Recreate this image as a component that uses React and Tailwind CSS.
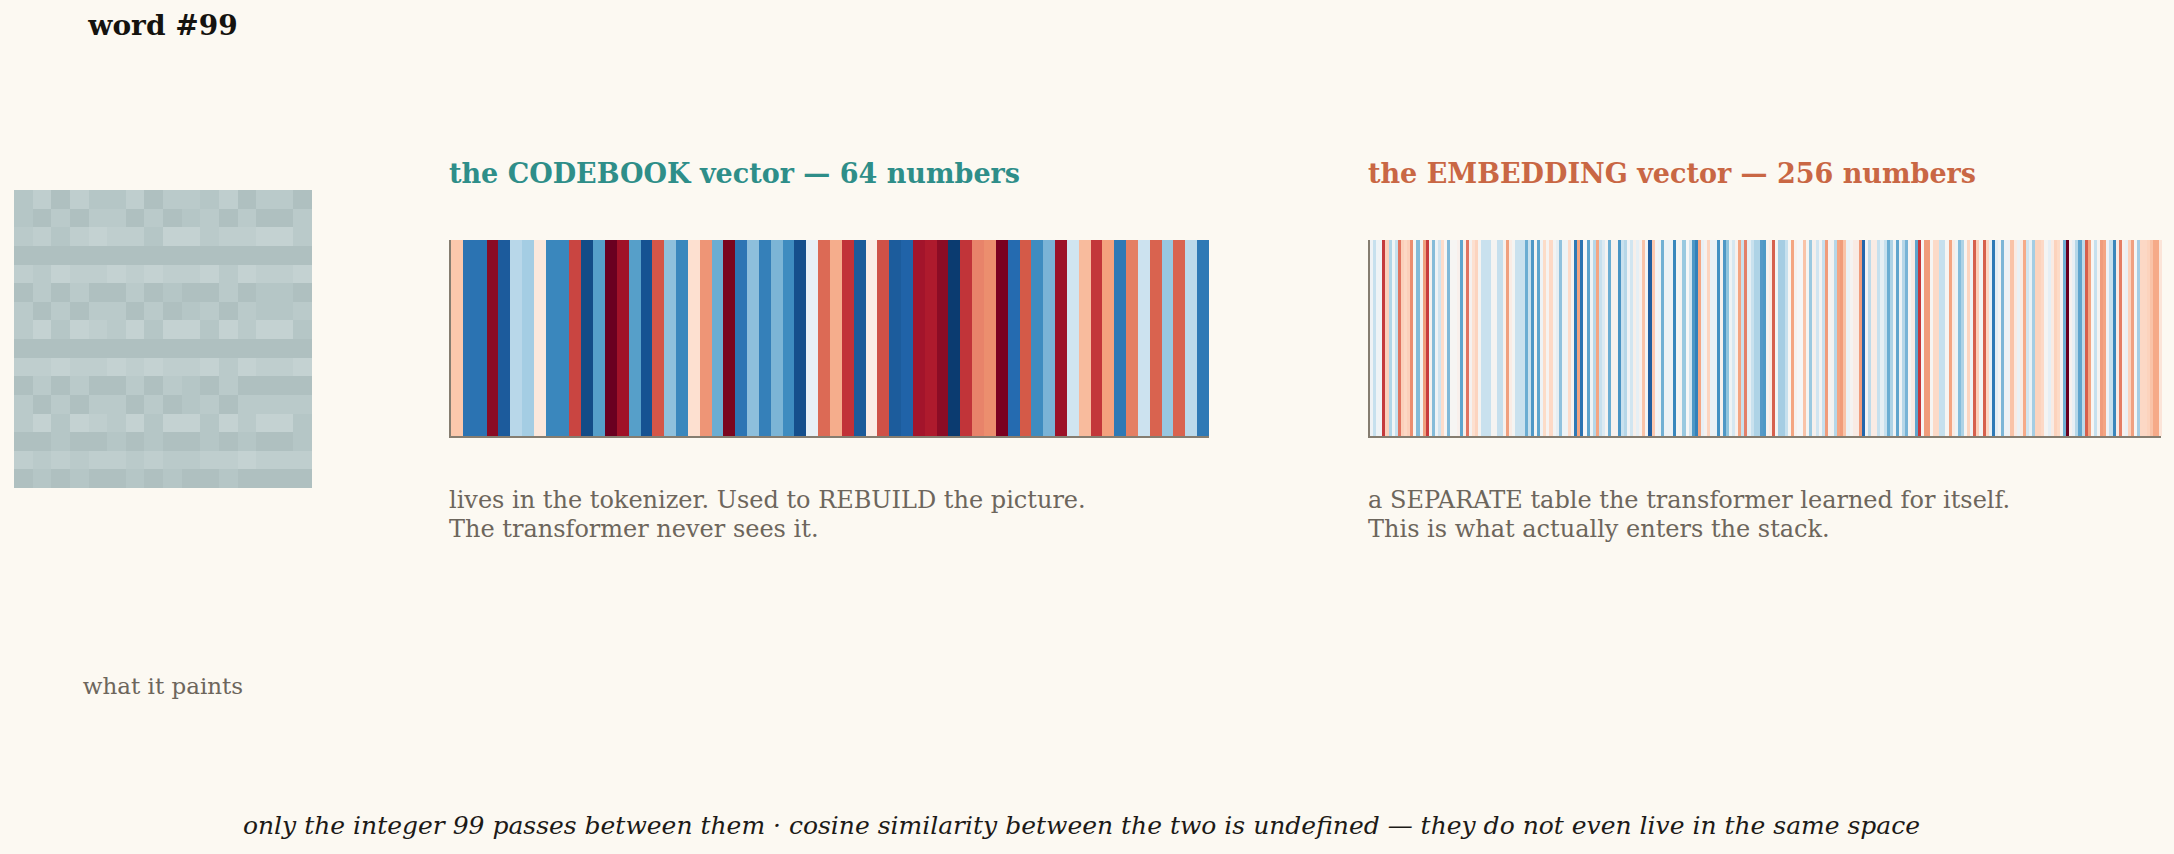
// codebook vs embedding strip plot for one token
const codebook = [
  '#fbc8ac', '#2b73b2', '#2b73b2', '#8a0b24', '#1c5b9c', '#b8d7e9', '#a4cde3', '#fbe8dc',
  '#3a87bd', '#3a87bd', '#c94541', '#134c87', '#569fc9', '#6a0020', '#a01228', '#569fc9',
  '#155292', '#d45648', '#8fc0dc', '#3a87bd', '#fde0d0', '#ee9576', '#6badd2', '#7a0620',
  '#2c75b4', '#8dbfdc', '#3580b9', '#7cb5d6', '#3e8cc0', '#154f8c', '#e8f0f6', '#dc6a55',
  '#f5ad8c', '#c13238', '#1c5b9a', '#fbece5', '#cf5147', '#1c5c9c', '#2063a8', '#a3142b',
  '#ae1a2d', '#8b0c25', '#0b3b70', '#c13439', '#e8836a', '#ec8e6e', '#7a0020', '#256bb0',
  '#d45a48', '#3e8cc0', '#7ab3d6', '#9c1228', '#d0e5f0', '#f8bb9d', '#c3373a', '#f4a27e',
  '#2e79b5', '#e47f63', '#cce2ef', '#d9634f', '#98c7e0', '#d9634f', '#bbd9ea', '#2e79b5',
];

const embedding = [
  // 0-63
  '#eef2f5', '#c6e0ee', '#eef3f6', '#eef3f6', '#c43a3c', '#fcd0bb', '#b0d5e8', '#f0f4f6',
  '#c6e0ee', '#e17360', '#fbd0bb', '#fcd8c5', '#fbd0bb', '#ec8d70', '#f6f5f3', '#84bbd9',
  '#f3f1f0', '#f0a07f', '#c83a3d', '#f4f1ee', '#84bbd9', '#eef2f5', '#cfe3ef', '#fddcca',
  '#f7f4f2', '#80b8d8', '#f6f5f3', '#f6f5f3', '#f8f0ec', '#5fa5cd', '#f9efea', '#e07360',
  '#f5f1ef', '#fde0d0', '#fcd4bf', '#f5f3f1', '#c9e1ee', '#c9e1ee', '#c9e1ee', '#f5f3f1',
  '#f5f3f1', '#c6dfed', '#c6dfed', '#f7f1ee', '#f0a07f', '#f9ece5', '#f4f4f2', '#c9e1ee',
  '#c9e1ee', '#c9e1ee', '#6badd2', '#c9e1ee', '#4f98c6', '#f4f4f2', '#5fa5cd', '#eef3f6',
  '#fcdcc8', '#f6f3f1', '#fdd9c6', '#f2f3f3', '#e6eef3', '#8fc1dd', '#eef3f5', '#eef3f5',
  // 64-127
  '#fddbc9', '#f6f3f1', '#2f79b5', '#f4a582', '#2c73b1', '#f7f7f7', '#5da3cc', '#eef3f5',
  '#b6d7e8', '#f4a582', '#c6e0ee', '#dceaf2', '#f5f3f1', '#6badd2', '#f7f1ee', '#f7f1ee',
  '#4a94c4', '#c9e1ee', '#b6d7e8', '#f0f3f5', '#d1e5f0', '#f7efea', '#e6eff4', '#f5f1ef',
  '#f9c3a8', '#f4f4f3', '#1f5e9f', '#fcc9b0', '#f2f4f5', '#eef3f5', '#72b0d4', '#eef2f5',
  '#eef2f5', '#eef2f5', '#3987bd', '#f6f5f3', '#f4f3f2', '#9ac9e0', '#f7f7f7', '#d1e5f0',
  '#4f98c6', '#3381ba', '#f4a582', '#e8eff4', '#f5f1ef', '#fcd5c0', '#eaf1f5', '#eaf1f5',
  '#4290c2', '#f7f1ee', '#4f98c6', '#92c5de', '#eef3f5', '#d6e7f1', '#f7f1ee', '#f4a582',
  '#c9e1ee', '#e3806a', '#e6eff4', '#c9e1ee', '#aed3e6', '#aed3e6', '#5699c7', '#4f98c6',
  // 128-191
  '#f7f1ee', '#f9ebe4', '#d6604d', '#f5f3f1', '#a5cde3', '#a5cde3', '#c6e0ee', '#f6f5f3',
  '#f4a582', '#f7f1ee', '#f5f6f7', '#f5f6f7', '#f9c3a8', '#f4f4f3', '#9ac9e0', '#f5f0ed',
  '#d1e5f0', '#f4f4f3', '#c6e0ee', '#f09c7b', '#f7f1ee', '#f2f2f1', '#b6d7e8', '#f4a582',
  '#f09c7b', '#f9c3a8', '#eaf1f5', '#f5f3f1', '#f9ebe4', '#f9ebe4', '#f09c7b', '#2166ac',
  '#f1f3f4', '#bcdaea', '#f9ebe4', '#f9ebe4', '#c6e0ee', '#e6eff4', '#c6e0ee', '#6badd2',
  '#aed3e6', '#eef3f5', '#60a5cd', '#eef3f5', '#b6d7e8', '#78b4d6', '#f6f5f3', '#f9ebe4',
  '#60a5cd', '#c6373b', '#f6f5f3', '#f09c7b', '#f09c7b', '#f6f5f3', '#fcdac8', '#fcdac8',
  '#c6e0ee', '#c6e0ee', '#f6f5f3', '#f4a582', '#f9ebe4', '#eef3f5', '#86bddb', '#aed3e6',
  // 192-255
  '#f6f4f2', '#fcd5bf', '#eef3f5', '#d6604d', '#fcd0ba', '#f2f4f4', '#d6604d', '#fdd7c4',
  '#eaf1f5', '#2f7ab6', '#e6eef3', '#f4f4f3', '#7db6d7', '#eef2f5', '#eef2f5', '#f9c3a8',
  '#f9ebe4', '#eaf1f5', '#f9ebe4', '#f6aa88', '#d1e5f0', '#eaf1f5', '#a5cde3', '#fcd3bd',
  '#fcd3bd', '#fdd9c6', '#f4f4f3', '#e6eff4', '#f9ebe4', '#fcd3bd', '#fddbc7', '#f5f3f1',
  '#70afd3', '#67001f', '#f7f1ee', '#e8eff4', '#b6d7e8', '#60a5cd', '#bcdaea', '#d6604d',
  '#f4a582', '#f6f5f3', '#c6e0ee', '#f5f3f1', '#f09c7b', '#f4a582', '#eef2f5', '#c6e0ee',
  '#3a86bc', '#f9ebe4', '#e47d64', '#f7f1ee', '#eaf1f5', '#fcd3bd', '#f0a07f', '#f6f5f3',
  '#a5cde3', '#fcd8c5', '#fcd8c5', '#fcd3bd', '#f9c3a8', '#f6aa88', '#f6aa88', '#fbe4d8',
];

// 16x16 decoded patch, A = darkest .. E = lightest
const shades = { A: '#afc0c0', B: '#b5c6c6', C: '#bacaca', D: '#bfcece', E: '#c4d2d2' };
const patch = [
  'BDADBBDACCBDACCA',
  'BACACCACABCACAAC',
  'CDBDEDDBEECDDEEC',
  'AAAAAAAAAAAAAAAA',
  'DCEDDEDEDDECEDDE',
  'ACACAACABAACABBA',
  'CACACCACABCACBBC',
  'CEBEDCEBEEBECEEB',
  'AAAAAAAAAAAAAAAA',
  'DDEDDEDEDDECEDDE',
  'ACACAACACBACAAAA',
  'CACACCACABCACCCC',
  'CEBEDCEBEEBECEEB',
  'AABAABABAABABAAB',
  'DCDCDDCDCCDDEDDD',
  'ABABAABABAABAAAA',
];

function Strip({ colors, width }) {
  return (
    <div className={`flex h-[198px] border-l-2 border-b-2 border-[#857d70] ${width}`}>
      {colors.map((c, i) => (
        <div key={i} className="flex-1" style={{ backgroundColor: c }} />
      ))}
    </div>
  );
}

export default function App() {
  return (
    <div className="flex h-[854px] w-[2174px] flex-col bg-[#fcf9f2] font-['DejaVu_Serif',serif]">
      <div className="flex items-start pl-[14px]">
        {/* left: the patch */}
        <div className="flex w-[298px] flex-col items-center pt-[10px]">
          <h1 className="text-[28px] leading-[32px] font-bold text-[#15130f]">word #99</h1>
          <div className="mt-[148px] grid h-[298px] w-[298px] grid-cols-16 grid-rows-16">
            {patch.join('').split('').map((k, i) => (
              <div key={i} style={{ backgroundColor: shades[k] }} />
            ))}
          </div>
          <p className="mt-[183.5px] text-[23px] leading-[28px] text-[#6d665c]">what it paints</p>
        </div>

        {/* codebook */}
        <div className="ml-[137px] w-[760px] pt-[158px]">
          <h2 className="text-[27px] leading-[32px] font-bold text-[#2e8e89]">
            the CODEBOOK vector — 64 numbers
          </h2>
          <div className="mt-[50px]">
            <Strip colors={codebook} width="w-[760px]" />
          </div>
          <p className="mt-[48px] text-[24px] leading-[28.5px] text-[#6d665c] whitespace-nowrap">
            <span className="block">lives in the tokenizer. Used to REBUILD the picture.</span>
            <span className="block">The transformer never sees it.</span>
          </p>
        </div>

        {/* embedding */}
        <div className="ml-[159px] w-[793px] pt-[158px]">
          <h2 className="text-[27px] leading-[32px] font-bold text-[#c96744]">
            the EMBEDDING vector — 256 numbers
          </h2>
          <div className="mt-[50px]">
            <Strip colors={embedding} width="w-[793px]" />
          </div>
          <p className="mt-[48px] text-[24px] leading-[28.5px] text-[#6d665c] whitespace-nowrap">
            <span className="block">a SEPARATE table the transformer learned for itself.</span>
            <span className="block">This is what actually enters the stack.</span>
          </p>
        </div>
      </div>

      <p className="mt-auto pr-[11px] pb-[13.5px] text-center text-[25px] leading-[30px] italic text-[#1c1a17]">
        only the integer 99 passes between them · cosine similarity between the two is undefined — they do not even live in the same space
      </p>
    </div>
  );
}
